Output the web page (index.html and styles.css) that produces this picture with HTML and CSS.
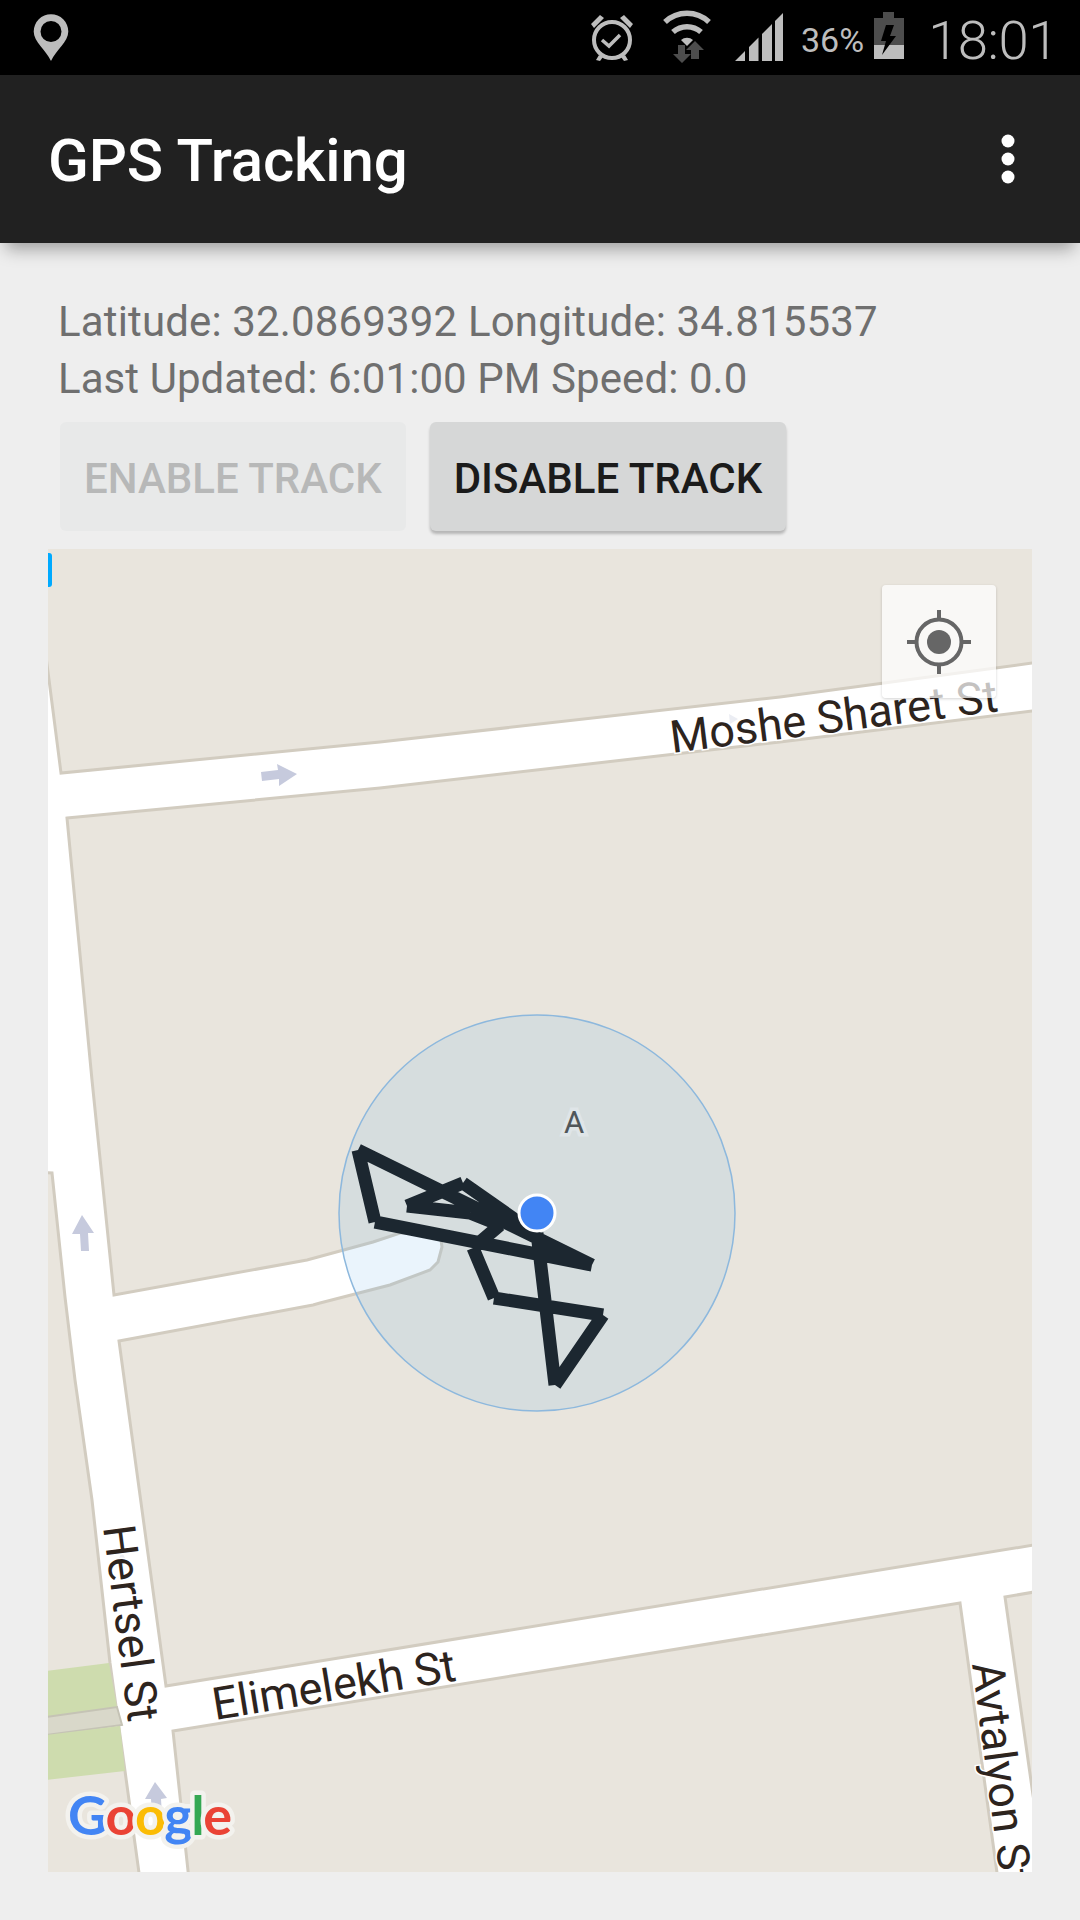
FILE: index.html
```html
<!DOCTYPE html>
<html lang="en">
<head>
<meta charset="utf-8">
<title>GPS Tracking</title>
<link rel="stylesheet" href="styles.css">
</head>
<body>
<div class="status">
  <svg class="ic-pin" viewBox="33 14 36 48"><path class="si" fill-rule="evenodd" d="M51 61C46 50 33.700 42 33.700 31.500a17.300 17.300 0 0 1 34.600 0C68.300 42 56 50 51 61ZM51 21a10.500 10.500 0 1 0 0 21a10.500 10.500 0 0 0 0-21Z"/></svg>
  <div class="status-right">
    <svg class="ic-clock" viewBox="591 14 44 48">
      <circle class="sl" cx="613" cy="40" r="18"/>
      <path class="sl sl-thin" d="M603 40l7 6l11-11"/>
      <path class="si" d="M592 24l9-9l4 3l-10 10ZM634 24l-9-9l-4 3l10 10Z"/>
      <path class="si" d="M600 55l-3 5l4 1l3-4ZM626 55l3 5l-4 1l-3-4Z"/>
    </svg>
    <svg class="ic-wifi" viewBox="662 9 52 55">
      <path class="sl sl-wifi" d="M666 22a32 32 0 0 1 44 0"/>
      <path class="sl sl-wifi" d="M674 32a21 21 0 0 1 28 0"/>
      <path class="si" d="M682 40a9 9 0 0 1 12 0l-6 6Z"/>
      <path class="sd" d="M679 45h7v9h6l-9 9l-9-9h5Z"/>
      <path class="sd" d="M696 41l9 9h-5v9h-8v-9h-5Z"/>
    </svg>
    <svg class="ic-signal" viewBox="736 13 48 48">
      <path class="si" d="M736 61l10-10v10ZM750 47l9.500-9.500V61H750ZM763 34l10-10V61H763ZM776 21l8-8V61H776Z"/>
    </svg>
    <span class="pct">36%</span>
    <svg class="ic-batt" viewBox="877 12 30 48">
      <path class="sd" d="M886 12h11v6h10v27H877V18h9Z"/>
      <rect class="si" x="877" y="45" width="30" height="14"/>
      <path class="bolt" d="M889 25h8l-4 11h6l-14 19l4-14h-5Z"/>
    </svg>
    <span class="clock">18:01</span>
  </div>
</div>

<header class="appbar">
  <h1 class="title">GPS Tracking</h1>
  <svg class="menu" viewBox="0 0 14 50"><circle cx="7" cy="7" r="6.500"/><circle cx="7" cy="25" r="6.500"/><circle cx="7" cy="43" r="6.500"/></svg>
</header>

<main class="content">
  <div class="info">
    <div>Latitude: 32.0869392 Longitude: 34.815537</div>
    <div class="info-tight">Last Updated: 6:01:00 PM Speed: 0.0</div>
  </div>
  <div class="actions">
    <button class="btn btn-off" disabled>ENABLE TRACK</button>
    <button class="btn btn-on">DISABLE TRACK</button>
  </div>
  <section class="map">
    <svg class="map-canvas" viewBox="48 549 984 1323">
      <rect class="road" x="40" y="540" width="1000" height="1340"/>
      <polygon class="block" points="40,540 1040,540 1040,662 780,697 380,742 61,773 48,672 40,610"/>
      <polygon class="block" points="67,818 380,788 780,742 1040,710 1040,1544 166,1686 119,1341 313,1305 320,1303 390,1285 430,1270 438,1262 442,1247 440,1233 400,1233 373,1242 307,1260 114,1295 92,1080"/>
      <polygon class="block" points="173,1731 960,1603 998,1880 189,1880"/>
      <polygon class="block" points="1005,1597 1040,1591 1040,1840 1033,1795"/>
      <polygon class="block" points="40,1172 52,1173 65,1297 75,1380 92,1500 110,1663 125,1771 140,1880 40,1880"/>
      <polygon class="park" points="46,1671 109,1663 117,1707 46,1717"/>
      <polygon class="lane" points="46,1717 117,1707 122,1725 46,1735"/>
      <polygon class="park" points="46,1735 120,1726 125,1771 46,1780"/>
      <polygon class="arrow" points="261,772 278,770 277,764 297,774 279,786 279,779 262,781"/>
      <polygon class="arrow" points="82,1215 94,1233 88,1233 89,1251 81,1251 80,1234 72,1234"/>
      <polygon class="arrow" points="155,1782 167,1798 161,1799 162,1815 152,1815 151,1799 145,1799"/>
      <polygon class="arrow arrow-faint" points="122,1552 127,1562 124,1562 124,1572 120,1572 120,1562 117,1562"/>
      <polygon class="arrow arrow-faint" points="729,714 738,719 730,724"/>
      <rect class="tab" x="44" y="553" width="8" height="34" rx="3"/>
      <text class="street" transform="translate(672 753) rotate(-7.300)">Moshe Sharet St</text>
      <text class="street" transform="translate(215 1720) rotate(-9.300)">Elimelekh St</text>
      <text class="street" transform="translate(103 1527) rotate(82.600)">Hertsel St</text>
      <text class="street" transform="translate(972 1664) rotate(82.500)">Avtalyon St</text>
      <circle class="accuracy" cx="537" cy="1213" r="198"/>
      <text class="poi" x="574" y="1133">A</text>
      <path class="track" d="M358 1150L592 1265M358 1150L375 1222M375 1222L592 1265M407 1206L463 1183M463 1183L530 1230M407 1206L470 1213M470 1213L500 1225M500 1225L473 1248M473 1248L494 1298M494 1298L603 1315M603 1315L555 1385M555 1385L537 1233"/>
      <circle class="dot" cx="537" cy="1213" r="18"/>
      <text class="logo" x="68" y="1835"><tspan class="g-blue">G</tspan><tspan class="g-red">o</tspan><tspan class="g-yellow">o</tspan><tspan class="g-blue">g</tspan><tspan class="g-green">l</tspan><tspan class="g-red">e</tspan></text>
    </svg>
    <div class="locate">
      <svg class="locate-icon" viewBox="0 0 64 64">
        <circle class="loc-ring" cx="32" cy="32" r="22.500"/>
        <circle class="loc-core" cx="32" cy="32" r="12"/>
        <path class="loc-ring" d="M32 0v9M32 55v9M0 32h9M55 32h9"/>
      </svg>
    </div>
  </section>
</main>
</body>
</html>
```
FILE: styles.css
```css
* { box-sizing: border-box; }
html, body { margin: 0; padding: 0; }
body {
  width: 1080px;
  height: 1920px;
  overflow: hidden;
  background: #eeeeee;
  font-family: Roboto, "Liberation Sans", sans-serif;
}

/* status bar */
.status {
  height: 75px;
  background: #000;
  display: flex;
  align-items: flex-start;
  justify-content: space-between;
  padding: 14px 22px 0 33px;
  color: #bdbdbd;
}
.status-right { display: flex; align-items: flex-start; height: 61px; margin-top: -14px; position: relative; }
.ic-pin { width: 36px; height: 48px; }
.ic-clock { width: 44px; height: 48px; margin-top: 14px; }
.ic-wifi { width: 52px; height: 55px; margin: 9px 0 0 27px; }
.ic-signal { width: 48px; height: 48px; margin: 13px 0 0 22px; }
.ic-batt { width: 30px; height: 48px; margin: 12px 0 0 10px; }
.pct { font-size: 34px; line-height: 40px; margin: 20px 0 0 18px; font-weight: 400; }
.clock { font-size: 54.500px; line-height: 64px; margin: 8px 0 0 24px; font-weight: 300; letter-spacing: -0.5px; }
.si { fill: #bdbdbd; }
.sd { fill: #4d4d4d; }
.sl { fill: none; stroke: #bdbdbd; stroke-width: 4; }
.sl-thin { stroke-width: 3.500; }
.sl-wifi { stroke-width: 5.500; }
.bolt { fill: #000; }

/* app bar */
.appbar {
  height: 168px;
  background: #212121;
  display: flex;
  align-items: center;
  justify-content: space-between;
  padding: 0 65px 0 48px;
  box-shadow: 0 12px 16px -6px rgba(0, 0, 0, 0.34);
  position: relative;
}
.title { margin: 4px 0 0; font-size: 60px; font-weight: 500; color: #fff; line-height: 72px; letter-spacing: -0.15px; }
.menu { width: 14px; height: 50px; fill: #fff; }

/* content */
.content { padding: 50px 48px 0; }
.info {
  padding-left: 10px;
  font-size: 42px;
  line-height: 57px;
  color: #6f6f6f;
  white-space: nowrap;
  letter-spacing: 0.15px;
}
.info-tight { letter-spacing: 0.07px; }
.actions { display: flex; gap: 24px; margin: 15px 0 0 12px; align-items: center; }
.btn {
  height: 109px;
  border: 0;
  border-radius: 6px;
  padding: 4px 24px 0;
  font-family: inherit;
  font-size: 42px;
  font-weight: 500;
}
.btn-off { background: #e8e9e9; color: #b7b8b8; }
.btn-on { background: #d6d7d7; color: #1b1b1b; box-shadow: 0 3px 3px rgba(0, 0, 0, 0.24); }

/* map */
.map { position: relative; width: 984px; height: 1323px; margin-top: 18px; overflow: hidden; }
.map-canvas { display: block; width: 984px; height: 1323px; }
.road { fill: #fff; }
.block { fill: #e9e5dd; stroke: #d2ccc0; stroke-width: 3; }
.park { fill: #cedcae; }
.lane { fill: #d9d8ca; stroke: #c5c3b5; stroke-width: 2; }
.arrow { fill: #c6cadd; }
.arrow-faint { opacity: 0.35; }
.tab { fill: #00aaff; }
.street {
  font-family: Roboto, sans-serif;
  font-size: 45px;
  fill: #2d241e;
  stroke: #fff;
  stroke-width: 3px;
  paint-order: stroke;
}
.accuracy { fill: rgba(90, 170, 235, 0.13); stroke: #8db8dd; stroke-width: 1.500; }
.poi {
  font-family: Roboto, sans-serif;
  font-size: 31px;
  text-anchor: middle;
  fill: #50565a;
  stroke: #dfe5e8;
  stroke-width: 7px;
  stroke-linejoin: miter;
  paint-order: stroke;
}
.track { fill: none; stroke: #1c2730; stroke-width: 13; stroke-linecap: butt; }
.dot { fill: #4285f4; stroke: #fff; stroke-width: 3; }
.logo {
  font-family: Lato, sans-serif;
  font-size: 54px;
  font-weight: 700;
  letter-spacing: -1.5px;
  stroke: #f3f2ee;
  stroke-width: 9px;
  stroke-linejoin: round;
  paint-order: stroke;
}
.g-blue { fill: #4285f4; }
.g-red { fill: #ea4335; }
.g-yellow { fill: #fbbc05; }
.g-green { fill: #34a853; }

.locate {
  position: absolute;
  left: 834px;
  top: 36px;
  width: 114px;
  height: 113px;
  border-radius: 4px;
  background: rgba(255, 255, 255, 0.72);
  box-shadow: 0 1px 3px rgba(0, 0, 0, 0.18);
  display: flex;
  align-items: center;
  justify-content: center;
}
.locate-icon { width: 64px; height: 64px; }
.loc-ring { fill: none; stroke: #666; stroke-width: 4; }
.loc-core { fill: #666; }
```
